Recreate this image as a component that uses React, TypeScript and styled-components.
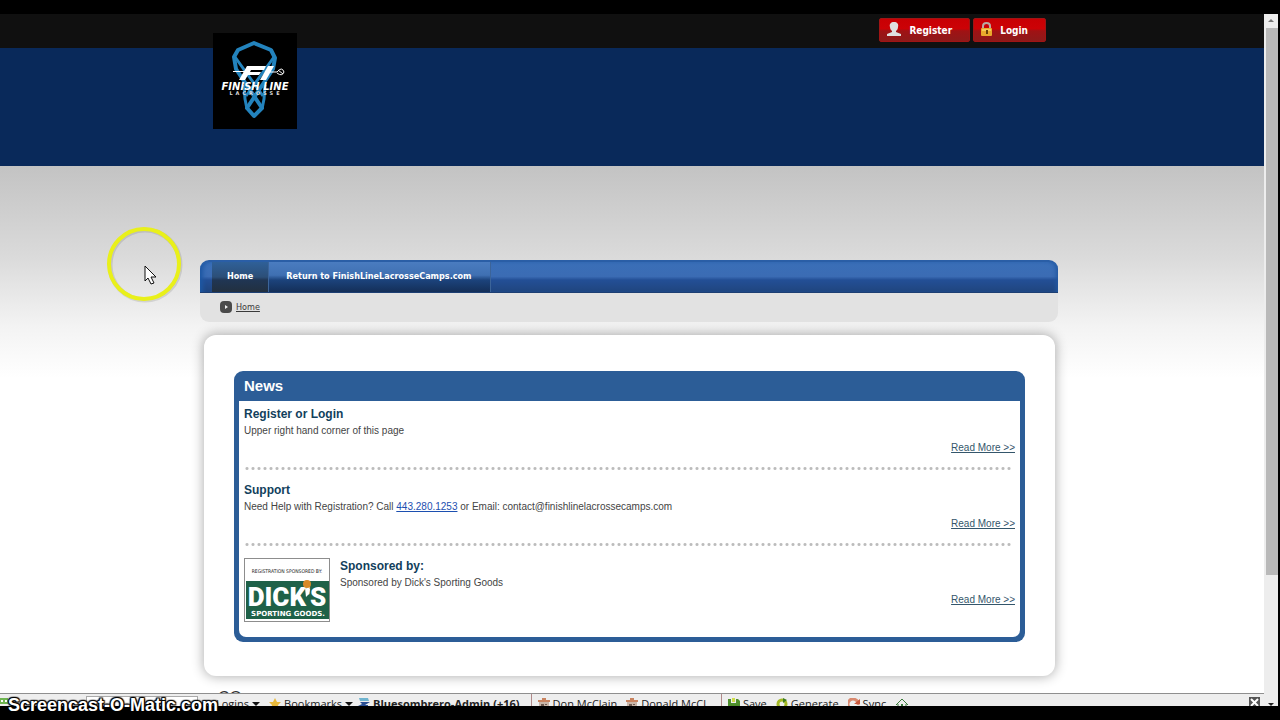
import React from "react";
import styled, { createGlobalStyle, css } from "styled-components";

const Global = createGlobalStyle`
  * { box-sizing: border-box; }
  body { margin: 0; background: #000; font-family: "Liberation Sans", Arial, sans-serif; }
  h2, h3, p, ul { margin: 0; padding: 0; }
`;

const uiFont = `"DejaVu Sans Condensed", "DejaVu Sans", Tahoma, sans-serif`;

const Screen = styled.div`
  position: relative;
  display: flex;
  min-height: 100vh;
  padding: 14px 2px 14px 0;
  background: #000;
`;

const Viewport = styled.div`
  flex: 1;
  min-width: 0;
  display: flex;
  flex-direction: column;
`;

const Page = styled.div`
  flex: 1 1 0;
  overflow: hidden;
  background: #fff;
`;

const Container = styled.div`
  width: 100%;
  max-width: 864px;
  margin: 0 auto;
  padding-right: 6px;
`;

const TopBar = styled.div`
  background: #101010;
`;

const Account = styled(Container)`
  display: flex;
  justify-content: flex-end;
  gap: 3px;
  padding: 4px 18px 6px 0;
`;

const RedButton = styled.button`
  display: flex;
  align-items: center;
  gap: 8px;
  height: 24px;
  padding: 1px 17px 0 7px;
  border: 1px solid #a01414;
  border-radius: 2px;
  background: linear-gradient(#c80004 0%, #cc0206 44%, #a01214 54%, #8e1a1a 100%);
  color: #fff;
  font: bold 10px/22px ${uiFont};

  svg { margin-top: -3px; }
`;

const Banner = styled.header`
  background: #09295a;
`;

const BannerInner = styled(Container)`
  position: relative;
  height: 118px;
`;

const LogoLink = styled.a`
  position: absolute;
  left: 13px;
  top: -15px;
  display: block;
  width: 84px;
  height: 96px;
  background: #000;
`;

const Backdrop = styled.main`
  padding-top: 94px;
  background: linear-gradient(#c3c3c3 0, #dadada 90px, #f3f3f3 160px, #fff 212px);
`;

const Nav = styled.nav`
  display: flex;
  height: 33px;
  padding-left: 12px;
  border-radius: 9px 9px 0 0;
  border-top: 2px solid #2a5ea6;
  border-bottom: 1px solid #1d3f73;
  box-shadow: inset 5px 0 4px -2px #1d57a3, inset -5px 0 4px -3px #2358a0;
  background: linear-gradient(#3a6fb8 0, #3b6cb4 48%, #234f96 60%, #20457e 100%);
`;

const NavLink = styled.a<{ $active?: boolean }>`
  padding: 0 18px 0 17px;
  border-right: 1px solid #3c6499;
  background: linear-gradient(#4a7cc0 0, #3f70b2 44%, #1c437c 60%, #142f58 100%);
  color: #fff;
  font: bold 9px/28px ${uiFont};
  text-decoration: none;
  ${(p) =>
    p.$active &&
    css`
      padding: 0 15px;
      background: linear-gradient(#2f6098 0, #2c4f78 50%, #203654 60%, #22303f 100%);
    `}
`;

const Crumbs = styled.div`
  display: flex;
  align-items: center;
  gap: 4px;
  height: 29px;
  padding: 0 0 2px 20px;
  border-radius: 0 0 9px 9px;
  background: #e2e2e2;
`;

const CrumbLink = styled.a`
  color: #3a3a3a;
  font: 9px/14px ${uiFont};
`;

const Panel = styled.section`
  margin: 13px 3px 0 4px;
  padding: 36px 30px 34px;
  border-radius: 12px;
  background: #fff;
  box-shadow: 0 0 12px 1px rgba(0, 0, 0, 0.3);
`;

const NewsBox = styled.div`
  padding: 0 5px 5px;
  border-radius: 9px;
  background: #2c5d97;
`;

const NewsTitle = styled.h2`
  padding: 0 5px;
  color: #fff;
  font-size: 15px;
  line-height: 30px;
`;

const NewsList = styled.ul`
  padding: 5px 5px 0;
  height: 236px;
  border-radius: 0 0 7px 7px;
  background: #fff;
  list-style: none;
`;

const NewsItem = styled.li`
  display: flex;
  gap: 10px;
  height: 76px;
`;

const NewsBody = styled.div`
  flex: 1;
  display: flex;
  flex-direction: column;
`;

const Headline = styled.h3`
  color: #123f5c;
  font-size: 12px;
  line-height: 17px;
`;

const Text = styled.p`
  color: #444;
  font-size: 10px;
  line-height: 16px;
`;

const PhoneLink = styled.a`
  color: #1c4fb0;
`;

const ReadMore = styled.a`
  align-self: flex-end;
  color: #34566b;
  font-size: 10px;
  line-height: 18px;
`;

const Dots = styled.div`
  height: 3px;
  margin: 10px 2px 0 0;
  background: radial-gradient(circle, #bcbcbc 1px, transparent 2px) 0 0 / 6px 3px repeat-x;
`;

const Sponsor = styled.div`
  width: 86px;
  height: 64px;
  border: 1px solid #8d8d8d;
`;

const FooterLine = styled.footer`
  padding: 13px 62px 0 18px;
  color: #333;
  font-size: 16px;
  line-height: 18px;
`;

const Toolbar = styled.div`
  display: flex;
  align-items: flex-start;
  height: 13px;
  overflow: hidden;
  border-top: 1px solid #8f8f8f;
  background: #eee;
  color: #222;
  font: 11px/20px "Open Sans", "Noto Sans", sans-serif;
  white-space: nowrap;
`;

const Field = styled.input`
  width: 112px;
  height: 20px;
  margin: 2px 18px 0 78px;
  border: 1px solid #aaa;
  background: #fff;
`;

const Tool = styled.button<{ $bold?: boolean; $gap?: number }>`
  display: flex;
  align-items: flex-start;
  gap: 3px;
  flex: none;
  margin: 0 ${(p) => p.$gap ?? 9}px 0 0;
  padding: 0;
  border: 0;
  background: none;
  color: inherit;
  font: inherit;
  font-weight: ${(p) => (p.$bold ? 700 : 400)};

  svg { margin-top: 4px; }
`;

const Divider = styled.span`
  width: 1px;
  height: 20px;
  margin-right: 6px;
  background: #b08a8a;
`;

const CloseButton = styled(Tool)`
  margin: 0 4px 0 auto;
  svg { margin-top: 3px; }
`;

const ScrollTrack = styled.div`
  flex: none;
  display: flex;
  flex-direction: column;
  align-items: center;
  width: 14px;
  background: #ededed;
`;

const ScrollArrow = styled.div`
  height: 14px;
  padding-top: 3px;
  line-height: 0;
`;

const ScrollThumb = styled.div`
  width: 12px;
  height: 79%;
  margin-left: 2px;
  background: #b9b9b9;
`;

const ScrollEnd = styled.div`
  margin-top: auto;
  height: 7px;
  line-height: 0;
  overflow: hidden;
`;

const Watermark = styled.div`
  position: absolute;
  left: 8px;
  bottom: 5px;
  color: #fff;
  font-size: 18px;
  font-weight: 700;
  line-height: 20px;
  text-shadow: -1px -1px 1px #000, 1px -1px 1px #000, -1px 1px 1px #000, 1px 1px 1px #000, 0 0 2px #000, 0 0 2px #000;
`;

const Pointer = styled.svg`
  position: absolute;
  left: 104px;
  top: 224px;
`;

const FinishLineLogo = () => (
  <svg width="84" height="96" viewBox="0 0 84 96" role="img" aria-label="Finish Line Lacrosse">
    <g fill="none" stroke="#2383bd" strokeWidth="4" strokeLinejoin="round">
      <path d="M41 10 L58 17 L62 25 L60 36 L34 75 L41 83 L49 75 L23 36 L21 24 L25 17 Z" />
      <path d="M22 24 L50 63 M61 24 L33 63 M31 52 L32 66 L34 76 M52 52 L51 66 L49 76" strokeWidth="3" />
    </g>
    <g fill="#fff">
      <path d="M34 33 h19 l-2 4 h-13 l-1 2 h11 l-2 3 h-11 l-3 5 h-6 z" />
      <path d="M55 33 h6 l-8 14 h-6 z" />
      <path d="M20 38 h15 l-1 1 h-14 z" />
    </g>
    <path d="M57 39 L64 39 Q69 33 71 39 Q69 44 64 40 M65 37 L70 41" fill="none" stroke="#fff" strokeWidth="1" />
    <text x="42" y="57" textAnchor="middle" fill="#fff" fontFamily="DejaVu Sans" fontSize="10" fontWeight="700" fontStyle="italic">FINISH LINE</text>
    <text x="43" y="62" textAnchor="middle" fill="#ddd" fontFamily="DejaVu Sans" fontSize="5" fontWeight="700" letterSpacing="3">LACROSSE</text>
  </svg>
);

const SponsorLogo = () => (
  <svg width="84" height="62" viewBox="0 0 84 62" role="img" aria-label="Dick's Sporting Goods">
    <rect width="84" height="62" fill="#fff" />
    <text x="42" y="14" textAnchor="middle" fill="#222" fontFamily="DejaVu Sans Condensed" fontSize="5">REGISTRATION SPONSORED BY:</text>
    <rect x="1" y="22" width="83" height="38" fill="#1f6148" />
    <text x="42" y="47" textAnchor="middle" fill="#fff" fontFamily="Roboto" fontSize="26" fontWeight="900">DICK'S</text>
    <circle cx="62" cy="25" r="4" fill="#d98a26" />
    <path d="M60 29 l5 1 l-1 5 l-3 3 z" fill="#fff" />
    <text x="43" y="57" textAnchor="middle" fill="#fff" fontFamily="DejaVu Sans" fontSize="7" fontWeight="700">SPORTING GOODS.</text>
  </svg>
);

const UserIcon = () => (
  <svg width="14" height="16" viewBox="0 0 14 16" aria-hidden="true">
    <path d="M7 1 C10 1 12 3 11 6 C11 8 10 9 9 10 V11 L14 13 V15 H0 V13 L5 11 V10 C4 9 3 8 3 6 C2 3 4 1 7 1Z" fill="#e0e0e0" />
  </svg>
);

const LockIcon = () => (
  <svg width="11" height="14" viewBox="0 0 11 14" aria-hidden="true">
    <path d="M2 7 V4 Q2 1 5.500 1 Q9 1 9 4 V7" fill="none" stroke="#b9a9a0" strokeWidth="2" />
    <rect y="6" width="11" height="8" rx="1" fill="#e9a92c" />
    <rect x="1" y="7" width="9" height="2" fill="#f5cb58" />
    <path d="M5 8 h2 v4 h-2z" fill="#6b4108" />
  </svg>
);

const CrumbIcon = () => (
  <svg width="12" height="12" viewBox="0 0 12 12" aria-hidden="true">
    <rect width="12" height="12" rx="4" fill="#4a4a4a" />
    <path d="M5 4 l3 2 l-3 2z" fill="#eee" />
  </svg>
);

const Caret = () => (
  <svg width="8" height="12" viewBox="0 0 8 12" aria-hidden="true"><path d="M0 4 h8 l-4 4z" fill="#111" /></svg>
);
const StarIcon = () => (
  <svg width="12" height="12" viewBox="0 0 12 12" aria-hidden="true">
    <path d="M6 0 l2 4 l4 0 l-3 3 l1 5 l-4 -3 l-4 3 l1 -5 l-3 -3 l4 0z" fill="#e8b93c" />
  </svg>
);
const HatIcon = () => (
  <svg width="12" height="12" viewBox="0 0 12 12" aria-hidden="true">
    <path d="M1 0 h9 l1 3 h-9z" fill="#6fb4cf" /><path d="M2 4 h10 l-5 3 h3 v3 h-10 v-2 l4 -2z" fill="#2a4f93" />
  </svg>
);
const CardIcon = () => (
  <svg width="12" height="12" viewBox="0 0 12 12" aria-hidden="true">
    <path d="M4 0 h4 v2 h4 v2 h-12 v-2 h4z" fill="#c9835f" /><rect x="1" y="4" width="10" height="8" fill="#c9b5a8" />
    <path d="M3 6 h3 v4 h-3z M7 6 h2 v1 h-2z" fill="#6e5a50" />
  </svg>
);
const SaveIcon = () => (
  <svg width="12" height="12" viewBox="0 0 12 12" aria-hidden="true">
    <path d="M0 1 h3 v4 h5 v-4 h2 l2 2 v9 h-12z" fill="#4f8f2c" /><path d="M4 0 h3 v4 h-3z" fill="#cfdc4a" />
  </svg>
);
const GenerateIcon = () => (
  <svg width="12" height="12" viewBox="0 0 12 12" aria-hidden="true">
    <circle cx="6" cy="6" r="4" fill="none" stroke="#a3b824" strokeWidth="3" /><path d="M7 0 l4 2 l-4 3z" fill="#3f7d20" />
  </svg>
);
const SyncIcon = () => (
  <svg width="12" height="12" viewBox="0 0 12 12" aria-hidden="true">
    <path d="M2 10 A5 5 0 1 1 10 7" fill="none" stroke="#d98a70" strokeWidth="3" /><path d="M6 6 h6 v-5z" fill="#c9583c" />
  </svg>
);
const HomeIcon = () => (
  <svg width="14" height="12" viewBox="0 0 14 12" aria-hidden="true">
    <path d="M1 7 L7 1 L13 7 M3 6 V12 H11 V6" fill="none" stroke="#3b7a3b" strokeWidth="1" /><rect x="6" y="6" width="2" height="3" fill="#3b7a3b" />
  </svg>
);
const FormIcon = () => (
  <svg width="8" height="12" viewBox="0 0 8 12" aria-hidden="true">
    <rect y="4" width="8" height="6" fill="#6fb552" /><path d="M1 6 h2 v2 h-2z M5 6 h2 v2 h-2z" fill="#fff" />
  </svg>
);
const CloseIcon = () => (
  <svg width="11" height="11" viewBox="0 0 11 11" aria-hidden="true">
    <rect width="11" height="11" fill="#555" /><path d="M2 2 L9 9 M9 2 L2 9" stroke="#fff" strokeWidth="2" />
  </svg>
);

const news = [
  { title: "Register or Login", body: <>Upper right hand corner of this page</> },
  {
    title: "Support",
    body: (
      <>
        Need Help with Registration? Call <PhoneLink href="tel:4432801253">443.280.1253</PhoneLink> or Email:
        contact@finishlinelacrossecamps.com
      </>
    ),
  },
  { title: "Sponsored by:", body: <>Sponsored by Dick's Sporting Goods</>, sponsor: true },
];

export default function App() {
  return (
    <Screen>
      <Global />
      <Viewport>
        <Page>
          <TopBar>
            <Account>
              <RedButton><UserIcon />Register</RedButton>
              <RedButton><LockIcon />Login</RedButton>
            </Account>
          </TopBar>
          <Banner>
            <BannerInner>
              <LogoLink href="#"><FinishLineLogo /></LogoLink>
            </BannerInner>
          </Banner>
          <Backdrop>
            <Container>
              <Nav>
                <NavLink href="#" $active>Home</NavLink>
                <NavLink href="#">Return to FinishLineLacrosseCamps.com</NavLink>
              </Nav>
              <Crumbs>
                <CrumbIcon />
                <CrumbLink href="#">Home</CrumbLink>
              </Crumbs>
              <Panel>
                <NewsBox>
                  <NewsTitle>News</NewsTitle>
                  <NewsList>
                    {news.map((item, i) => (
                      <NewsItem key={item.title}>
                        {item.sponsor && <Sponsor><SponsorLogo /></Sponsor>}
                        <NewsBody>
                          <Headline>{item.title}</Headline>
                          <Text>{item.body}</Text>
                          <ReadMore href="#">Read More &gt;&gt;</ReadMore>
                          {i < news.length - 1 && <Dots />}
                        </NewsBody>
                      </NewsItem>
                    ))}
                  </NewsList>
                </NewsBox>
              </Panel>
              <FooterLine>CO</FooterLine>
            </Container>
          </Backdrop>
        </Page>
        <Toolbar>
          <FormIcon />
          <Field aria-label="Search" />
          <Tool>Logins <Caret /></Tool>
          <Tool $gap={5}><StarIcon />Bookmarks <Caret /></Tool>
          <Tool $bold $gap={11}><HatIcon />Bluesombrero-Admin (+16)</Tool>
          <Divider />
          <Tool><CardIcon />Don McClain</Tool>
          <Tool $gap={15}><CardIcon />Donald McCl</Tool>
          <Divider />
          <Tool><SaveIcon />Save</Tool>
          <Tool><GenerateIcon />Generate</Tool>
          <Tool><SyncIcon />Sync</Tool>
          <Tool aria-label="Home"><HomeIcon /></Tool>
          <CloseButton aria-label="Close"><CloseIcon /></CloseButton>
        </Toolbar>
      </Viewport>
      <ScrollTrack>
        <ScrollArrow><svg width="8" height="8" viewBox="0 0 8 8"><path d="M1 5 l3 -3 l3 3z" fill="#777" /></svg></ScrollArrow>
        <ScrollThumb />
        <ScrollEnd><svg width="8" height="8" viewBox="0 0 8 8"><path d="M1 4 h6 l-3 3z" fill="#222" /></svg></ScrollEnd>
      </ScrollTrack>
      <Watermark>Screencast-O-Matic.com</Watermark>
      <Pointer width="80" height="80" viewBox="0 0 80 80" aria-hidden="true">
        <circle cx="41" cy="41" r="35" fill="none" stroke="#000" strokeOpacity="0.1" strokeWidth="5" />
        <circle cx="40" cy="40" r="35" fill="none" stroke="#e9f01a" strokeWidth="4" />
        <path d="M41 42 V57 L44 54 L47 60 L50 59 L47 53 H52 Z" fill="#fff" stroke="#111" strokeWidth="1" />
      </Pointer>
    </Screen>
  );
}
